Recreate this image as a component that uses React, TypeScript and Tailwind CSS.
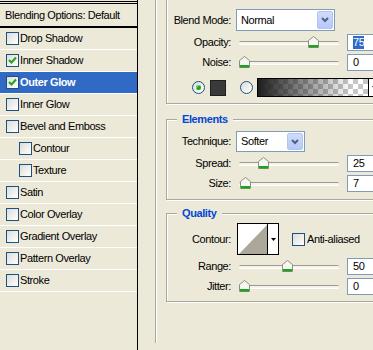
import React from "react";

function Check({ checked }: { checked?: boolean }) {
  return (
    <span className="flex h-[13px] w-[13px] shrink-0 items-center justify-center border border-[#1C5180] bg-[linear-gradient(135deg,#DCDCD7,#FFFFFF)]">
      {checked && (
        <svg width="9" height="9" viewBox="0 0 9 9">
          <path d="M1 4 L3.5 6.5 L8 1.5" stroke="#21A121" strokeWidth="2" fill="none" />
        </svg>
      )}
    </span>
  );
}

function Radio({ checked }: { checked?: boolean }) {
  return (
    <span className="flex h-[13px] w-[13px] shrink-0 items-center justify-center rounded-full border border-[#1C5180] bg-[linear-gradient(135deg,#DCDCD7,#FFFFFF)]">
      {checked && <span className="h-[5px] w-[5px] rounded-full bg-[#21A121] shadow-[inset_1px_1px_0_#7CD47C]" />}
    </span>
  );
}

function Chevron() {
  return (
    <svg width="8" height="6" viewBox="0 0 8 6">
      <path d="M1 1 L4 4 L7 1" stroke="#4D6185" strokeWidth="2" fill="none" />
    </svg>
  );
}

function Select({ text, className }: { text: string; className: string }) {
  return (
    <div className={`flex items-stretch border border-[#7F9DB9] bg-white p-[1px] ${className}`}>
      <span className="flex flex-1 items-center pl-[3px]">{text}</span>
      <span className="flex w-[16px] items-center justify-center rounded-[2px] border border-[#B2C5F2] bg-[linear-gradient(#CFDBFA,#B6C9F7)]">
        <Chevron />
      </span>
    </div>
  );
}

function Thumb({ left }: { left: number }) {
  return (
    <svg className="absolute top-[2px]" style={{ left }} width="11" height="12" viewBox="0 0 11 12">
      <path d="M5.5 0.5 L10.5 4.5 V11.5 H0.5 V4.5 Z" fill="#F7F7F2" stroke="#8E8E84" />
      <rect x="1" y="9" width="9" height="2.5" fill="#21A121" />
    </svg>
  );
}

function SliderRow({
  label,
  value,
  thumb,
  selected,
  className,
}: {
  label: string;
  value: string;
  thumb: number;
  selected?: boolean;
  className: string;
}) {
  return (
    <div className={`flex h-[17px] items-center ${className}`}>
      <span className="w-[65px] pr-[1px] text-right">{label}</span>
      <div className="relative ml-[7px] flex h-[17px] w-[100px] items-center">
        <div className="h-[3px] w-full rounded-full border-t border-[#9D9A8C] bg-[#F4F3EE] shadow-[0_1px_0_#fff]" />
        <Thumb left={thumb} />
      </div>
      <div className="ml-[8px] flex h-[17px] w-[40px] items-center border border-[#7F9DB9] bg-white pl-[5px]">
        {selected ? <span className="bg-[#316AC5] text-white">{value}</span> : value}
      </div>
    </div>
  );
}

function Group({
  title,
  className,
  children,
}: {
  title: string;
  className: string;
  children: React.ReactNode;
}) {
  return (
    <div
      className={`relative w-[240px] border border-[#ACA899] shadow-[inset_1px_1px_0_#fff,1px_1px_0_#fff] ${className}`}
    >
      <span className="absolute left-[10px] top-[-8px] bg-[#ECE9D8] px-[5px] text-[11px] font-bold leading-[14px] text-[#0046D5]">
        {title}
      </span>
      {children}
    </div>
  );
}

const rows: { label: string; checked?: boolean; selected?: boolean; indent?: boolean }[] = [
  { label: "Drop Shadow" },
  { label: "Inner Shadow", checked: true },
  { label: "Outer Glow", checked: true, selected: true },
  { label: "Inner Glow" },
  { label: "Bevel and Emboss" },
  { label: "Contour", indent: true },
  { label: "Texture", indent: true },
  { label: "Satin" },
  { label: "Color Overlay" },
  { label: "Gradient Overlay" },
  { label: "Pattern Overlay" },
  { label: "Stroke" },
];

export default function App() {
  return (
    <div className="flex h-[350px] w-[373px] overflow-hidden bg-[#ECE9D8] font-[Liberation_Sans,Arial,sans-serif] text-[11px] leading-[13px] tracking-[-0.4px] text-black">
      <div className="flex w-[138px] shrink-0 flex-col overflow-hidden border-r border-black">
        <div className="mt-[1px] h-px bg-black" />
        <div className="mt-[1px] h-px bg-black" />
        <div className="flex h-[24px] items-center whitespace-nowrap border-b-2 border-black pl-[5px]">Blending Options: Default</div>
        {rows.map((r) => (
          <div
            key={r.label}
            className={`flex h-[22px] items-center gap-px border-b border-white ${r.indent ? "pl-[19px]" : "pl-[6px]"} ${
              r.selected ? "bg-[#316AC5] font-bold text-white" : ""
            }`}
          >
            <Check checked={r.checked} />
            <span>{r.label}</span>
          </div>
        ))}
      </div>
      <div className="min-w-0 flex-1 pl-[17px]">
        <div className="h-full border-l border-[#ACA899] pl-[10px] shadow-[inset_1px_0_0_#fff]">
          <Group title="Structure" className="mt-[-7px] h-[111px] pt-[15px]">
            <div className="flex h-[22px] items-center">
              <span className="w-[65px] pr-[1px] text-right">Blend Mode:</span>
              <Select text="Normal" className="ml-[4px] h-[22px] w-[99px]" />
            </div>
            <SliderRow label="Opacity:" value="75" thumb={69} selected className="mt-[3px]" />
            <SliderRow label="Noise:" value="0" thumb={0} className="mt-[3px]" />
            <div className="mt-[7px] flex h-[19px] items-center">
              <span className="ml-[25px]">
                <Radio checked />
              </span>
              <span className="ml-[5px] h-[16px] w-[16px] border border-[#1E1E1E] bg-[#3A3A3A]" />
              <span className="ml-[14px]">
                <Radio />
              </span>
              <div className="ml-[4px] flex h-[19px] w-[130px] border border-black">
                <div className="h-full w-[110px] bg-[image:linear-gradient(to_right,#1E1E1E,rgba(0,0,0,0)_85%),repeating-conic-gradient(#C6C6C6_0%_25%,#FFFFFF_0%_50%)] bg-[length:100%_100%,10px_10px]" />
                <div className="flex w-[12px] items-center justify-center border-l border-black bg-white">
                  <svg width="5" height="3" viewBox="0 0 5 3">
                    <path d="M0 0 H5 L2.5 3 Z" fill="#000" />
                  </svg>
                </div>
              </div>
            </div>
          </Group>

          <Group title="Elements" className="mt-[15px] h-[81px] pt-[11px]">
            <div className="flex h-[21px] items-center">
              <span className="w-[65px] pr-[1px] text-right">Technique:</span>
              <Select text="Softer" className="ml-[4px] h-[21px] w-[69px]" />
            </div>
            <SliderRow label="Spread:" value="25" thumb={19} className="mt-[3px]" />
            <SliderRow label="Size:" value="7" thumb={1} className="mt-[3px]" />
          </Group>

          <Group title="Quality" className="mt-[13px] h-[89px] pt-[9px]">
            <div className="flex h-[32px] items-center">
              <span className="w-[65px] pr-[1px] text-right">Contour:</span>
              <div className="ml-[5px] flex h-[32px] w-[42px] border border-black bg-white">
                <svg width="29" height="30" viewBox="0 0 29 30" className="shrink-0">
                  <polygon points="1,30 29,1 29,30" fill="#ACA899" />
                </svg>
                <div className="flex flex-1 items-center justify-center border-l border-black">
                  <svg width="5" height="3" viewBox="0 0 5 3">
                    <path d="M0 0 H5 L2.5 3 Z" fill="#000" />
                  </svg>
                </div>
              </div>
              <span className="ml-[13px]">
                <Check />
              </span>
              <span className="ml-[2px]">Anti-aliased</span>
            </div>
            <SliderRow label="Range:" value="50" thumb={43} className="mt-[3px]" />
            <SliderRow label="Jitter:" value="0" thumb={0} className="mt-[3px]" />
          </Group>
        </div>
      </div>
    </div>
  );
}
